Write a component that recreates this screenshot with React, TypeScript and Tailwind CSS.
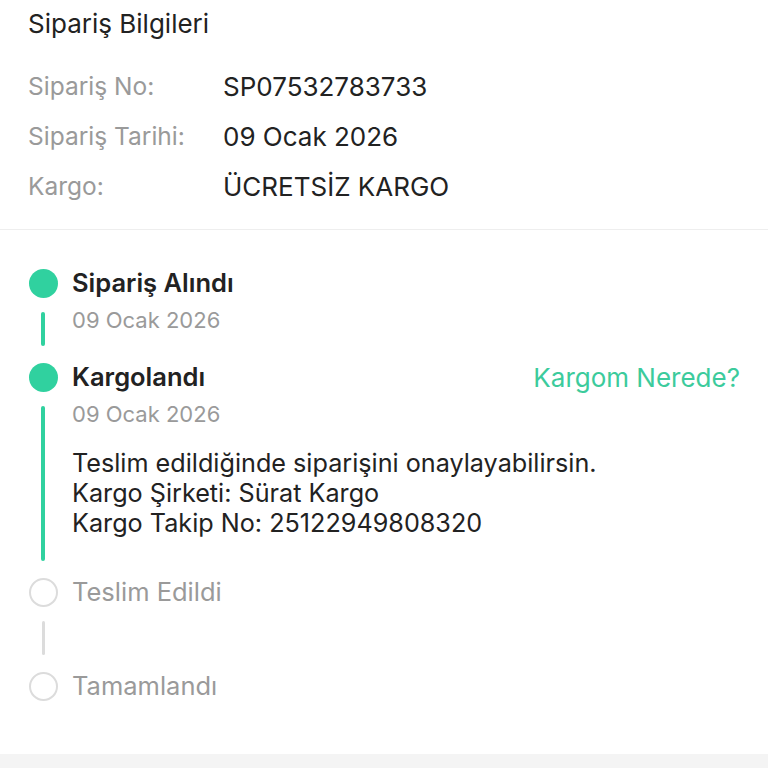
import React from "react";

// ─── Data ─────────────────────────────────────────────────────────────────────

const INFO_ROWS = [
    { label: "Sipariş No:", value: "SP07532783733" },
    { label: "Sipariş Tarihi:", value: "09 Ocak 2026" },
    { label: "Kargo:", value: "ÜCRETSİZ KARGO" },
];

type Step = {
    title: string;
    done: boolean;
    date?: string;
    lines?: string[];
    action?: string;
};

const STEPS: Step[] = [
    { title: "Sipariş Alındı", done: true, date: "09 Ocak 2026" },
    {
        title: "Kargolandı",
        done: true,
        date: "09 Ocak 2026",
        action: "Kargom Nerede?",
        lines: [
            "Teslim edildiğinde siparişini onaylayabilirsin.",
            "Kargo Şirketi: Sürat Kargo",
            "Kargo Takip No: 25122949808320",
        ],
    },
    { title: "Teslim Edildi", done: false },
    { title: "Tamamlandı", done: false },
];

// ─── Timeline step ────────────────────────────────────────────────────────────

function TimelineStep({ step, last }: { step: Step; last: boolean }) {
    return (
        <div className="grid grid-cols-[30px_1fr] gap-x-[16px]">
            {/* dot */}
            <div className="h-[30px] flex items-center justify-center">
                {step.done ? (
                    <span className="w-[29px] h-[29px] rounded-full bg-[#30d19f]" />
                ) : (
                    <span className="w-[29px] h-[29px] rounded-full border-2 border-[#dcdcdc] bg-white" />
                )}
            </div>
            <div className="h-[30px] flex items-center justify-between">
                <span className={step.done
                    ? "text-[25.5px] font-semibold text-[#222] -ml-[2px]"
                    : "text-[25.5px] text-[#9a9a9a] -ml-[2px]"}>
                    {step.title}
                </span>
                {step.action && (
                    <span className="text-[26px] text-[#3ccb9c]">{step.action}</span>
                )}
            </div>

            {/* connector + content */}
            {!last && (
                <>
                    <div className="flex justify-center pt-[14px] pb-[16px]">
                        <span className={step.done
                            ? "w-[4px] rounded-full bg-[#30d19f]"
                            : "w-[3px] rounded-full bg-[#dcdcdc]"} />
                    </div>
                    <div className="min-h-[64px] pt-[8px] pb-[26px] -ml-[2px]">
                        {step.date && (
                            <div className="text-[22px] leading-[28px] text-[#9a9a9a]">{step.date}</div>
                        )}
                        {step.lines && (
                            <div className="mt-[20px] pb-[13px] text-[25.2px] leading-[30px] text-[#222]">
                                {step.lines.map((l) => <div key={l}>{l}</div>)}
                            </div>
                        )}
                    </div>
                </>
            )}
        </div>
    );
}

// ─── App ──────────────────────────────────────────────────────────────────────

export default function App() {
    return (
        <div className="w-[768px] h-[768px] bg-white font-['Inter',sans-serif] overflow-hidden flex flex-col">
            {/* Sipariş Bilgileri */}
            <section className="px-7 pt-[10px] pb-[18px] border-b border-[#eeeeee]">
                <h2 className="text-[26px] leading-[28px] text-[#222]">Sipariş Bilgileri</h2>
                <div className="mt-[23px]">
                    {INFO_ROWS.map((r) => (
                        <div key={r.label} className="h-[50px] flex items-center">
                            <span className="w-[195px] text-[24.5px] text-[#9a9a9a]">{r.label}</span>
                            <span className="text-[26px] text-[#222]">{r.value}</span>
                        </div>
                    ))}
                </div>
            </section>

            {/* Timeline */}
            <section className="px-7 pt-[38px] pb-[53px]">
                {STEPS.map((s, i) => (
                    <TimelineStep key={s.title} step={s} last={i === STEPS.length - 1} />
                ))}
            </section>

            <div className="flex-1 bg-[#f4f4f4]" />
        </div>
    );
}
